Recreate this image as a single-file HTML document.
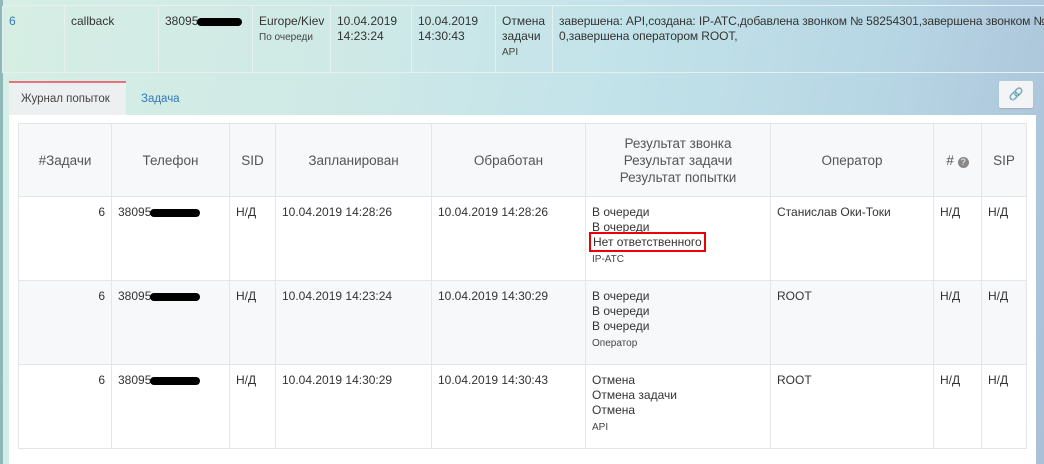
<!DOCTYPE html><html><head><meta charset="utf-8"><style>
*{box-sizing:border-box}body{margin:0;width:1044px;height:464px;overflow:hidden;font-family:"Liberation Sans",sans-serif;font-size:12px;color:#333;
background:linear-gradient(100deg,#d6eee4 0%,#cfe9e6 30%,#c3e3ea 55%,#b7d6e4 80%,#a9c0d8 100%);position:relative}
.strip{position:absolute;left:0;top:0;width:3px;height:464px;background:#8fb8b8}
.top{position:absolute;left:3px;top:5px;height:68px;width:1041px;border-top:1px solid #e6f0f0;border-bottom:1px solid #e6f0f0}
.top div{position:absolute;top:0;height:67px;border-left:1px solid #e6f0f0;padding:8px 6px;line-height:15px;font-size:12px;white-space:nowrap}
.sm{font-size:10px;color:#444}
.tabs{position:absolute;left:9px;top:81px}
.t1{position:absolute;left:0;top:0;width:117px;height:34px;background:#edf0f0;border-top:2px solid #e8727a;padding:10px 0 0 12px;font-size:11.5px;color:#444}
.t2{position:absolute;left:132px;top:12px;font-size:11.5px;color:#337ab7}
.btn{position:absolute;left:999px;top:81px;width:34px;height:27px;background:#f2f4f5;border-radius:2px;box-shadow:0 1px 1px #aab;text-align:center;line-height:27px;color:#666;font-size:12px}
.panel{position:absolute;left:9px;top:115px;width:1027px;height:349px;background:#fff}
table{position:absolute;left:9px;top:8px;border-collapse:collapse;font-size:12px}
td,th{border:1px solid #e3e6e9;vertical-align:top;padding:8px 6px;color:#333}
th{font-weight:normal;background:#f7f8fa;font-size:13.5px;vertical-align:middle;text-align:center;height:73px;color:#555;line-height:17px}
tr.r td{height:84px;line-height:15px}
tr.g td{background:#f7f8fa}
.blk{display:inline-block;width:50px;height:8px;background:#000;border-radius:4px;vertical-align:middle;margin-left:-1px}
.red{outline:2px solid #e00;outline-offset:1px;padding:0 1px}
</style></head><body><div class="strip"></div>
<div class="top">
<div style="left:-1px;width:62px;color:#337ab7">6</div>
<div style="left:61px;width:94px">callback</div>
<div style="left:155px;width:94px">38095<span class="blk" style="width:45px"></span></div>
<div style="left:249px;width:78px">Europe/Kiev<br><span class="sm">По очереди</span></div>
<div style="left:327px;width:81px">10.04.2019<br>14:23:24</div>
<div style="left:408px;width:84px">10.04.2019<br>14:30:43</div>
<div style="left:492px;width:57px">Отмена<br>задачи<br><span class="sm">API</span></div>
<div style="left:549px;width:500px;letter-spacing:-0.1px">завершена: API,создана: IP-АТС,добавлена звонком № 58254301,завершена звонком №<br>0,завершена оператором ROOT,</div>
</div>
<div class="tabs"><div class="t1">Журнал попыток</div><div class="t2">Задача</div></div>
<div class="btn">&#128279;</div>
<div class="panel"><table>
<tr><th style="width:93px">#Задачи</th><th style="width:118px">Телефон</th><th style="width:46px">SID</th><th style="width:156px">Запланирован</th><th style="width:154px">Обработан</th><th style="width:185px">Результат звонка<br>Результат задачи<br>Результат попытки</th><th style="width:163px">Оператор</th><th style="width:48px"># <span style="display:inline-block;width:11px;height:11px;border-radius:50%;background:#888;color:#fff;font-size:9px;line-height:11px">?</span></th><th style="width:45px">SIP</th></tr>
<tr class="r"><td style="text-align:right">6</td><td>38095<span class="blk"></span></td><td>Н/Д</td><td>10.04.2019 14:28:26</td><td>10.04.2019 14:28:26</td><td>В очереди<br>В очереди<br><span class="red">Нет ответственного</span><br><span class="sm" style="line-height:20px">IP-АТС</span></td><td>Станислав Оки-Токи</td><td>Н/Д</td><td>Н/Д</td></tr>
<tr class="r g"><td style="text-align:right">6</td><td>38095<span class="blk"></span></td><td>Н/Д</td><td>10.04.2019 14:23:24</td><td>10.04.2019 14:30:29</td><td>В очереди<br>В очереди<br>В очереди<br><span class="sm" style="line-height:20px">Оператор</span></td><td>ROOT</td><td>Н/Д</td><td>Н/Д</td></tr>
<tr class="r"><td style="text-align:right">6</td><td>38095<span class="blk"></span></td><td>Н/Д</td><td>10.04.2019 14:30:29</td><td>10.04.2019 14:30:43</td><td>Отмена<br>Отмена задачи<br>Отмена<br><span class="sm" style="line-height:20px">API</span></td><td>ROOT</td><td>Н/Д</td><td>Н/Д</td></tr>
</table></div>
</body></html>
